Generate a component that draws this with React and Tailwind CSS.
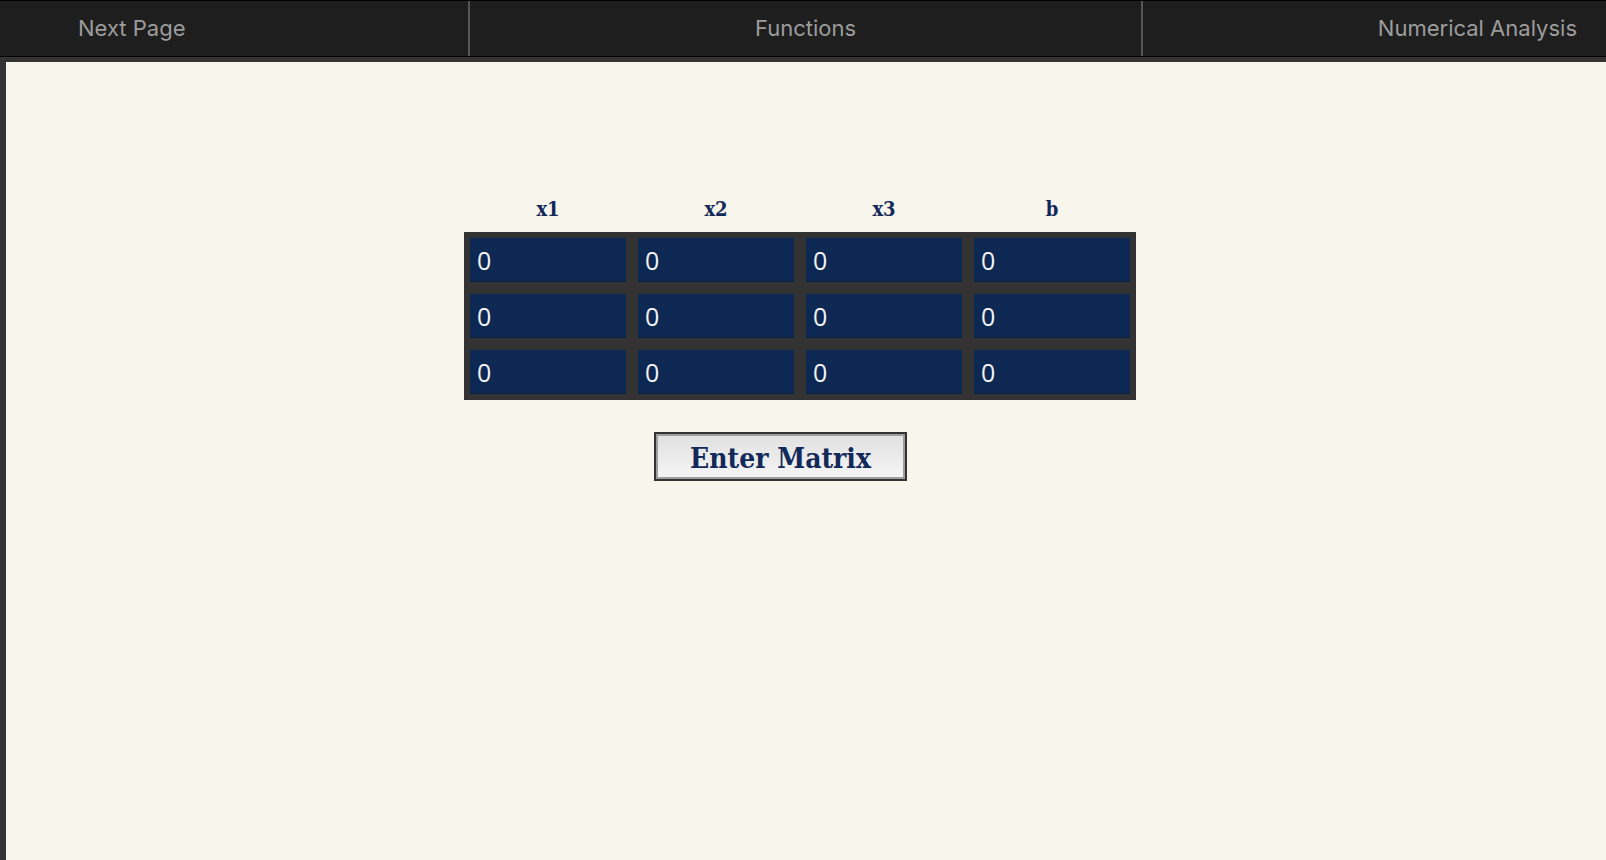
import React from "react";

const headers = ["x1", "x2", "x3", "b"];
const rows = [
  [0, 0, 0, 0],
  [0, 0, 0, 0],
  [0, 0, 0, 0],
];

const serif = { fontFamily: '"DejaVu Serif Condensed", "DejaVu Serif", serif' };

const App = () => {
  return (
    <div className="min-h-screen flex flex-col bg-[#1e1e1e]">
      {/* Top navigation */}
      <nav
        className="h-[57px] grid grid-cols-[468px_673px_1fr] border-t border-b border-black bg-[#1e1e1e] text-[22px] text-[#9c9c9c]"
        style={{ fontFamily: 'Inter, "Liberation Sans", sans-serif' }}
      >
        <div className="flex items-center pl-[78px]">Next Page</div>
        <div className="flex items-center justify-center border-l-2 border-[#555]">
          Functions
        </div>
        <div className="flex items-center justify-end pr-[29px] border-l-2 border-[#555]">
          Numerical Analysis
        </div>
      </nav>

      {/* Main area */}
      <main className="flex-1 border-t-[5px] border-l-[6px] border-[#333] bg-[#f8f5ec] pt-[135px]">
        <div className="ml-[458px] w-[672px]">
          {/* Column labels */}
          <div className="grid grid-cols-4 gap-[12px] px-[6px] mb-[11px]">
            {headers.map((h) => (
              <div
                key={h}
                className="text-center text-[20px] leading-[24px] font-bold text-[#12295a]"
                style={serif}
              >
                {h}
              </div>
            ))}
          </div>

          {/* Matrix inputs */}
          <div className="grid grid-cols-4 gap-[12px] p-[6px] bg-[#333]">
            {rows.map((row, r) =>
              row.map((v, c) => (
                <input
                  key={`${r}-${c}`}
                  defaultValue={v}
                  className="h-[44px] w-[156px] bg-[#0e2854] border-b border-[#0a1c3d] pl-[7px] text-[25px] text-[#f4f4f4] outline-none"
                  style={{ fontFamily: '"Open Sans", "Liberation Sans", sans-serif' }}
                />
              ))
            )}
          </div>

          {/* Submit */}
          <button
            className="mt-[32px] ml-[190px] w-[253px] h-[49px] flex items-center justify-center pt-1 border-2 border-[#333] bg-gradient-to-b from-[#e0e0e0] to-[#f6f6f6] shadow-[inset_0_0_0_2px_#9e9e9e] text-[28px] font-bold text-[#12295a]"
            style={serif}
          >
            Enter Matrix
          </button>
        </div>
      </main>
    </div>
  );
};

export default App;
